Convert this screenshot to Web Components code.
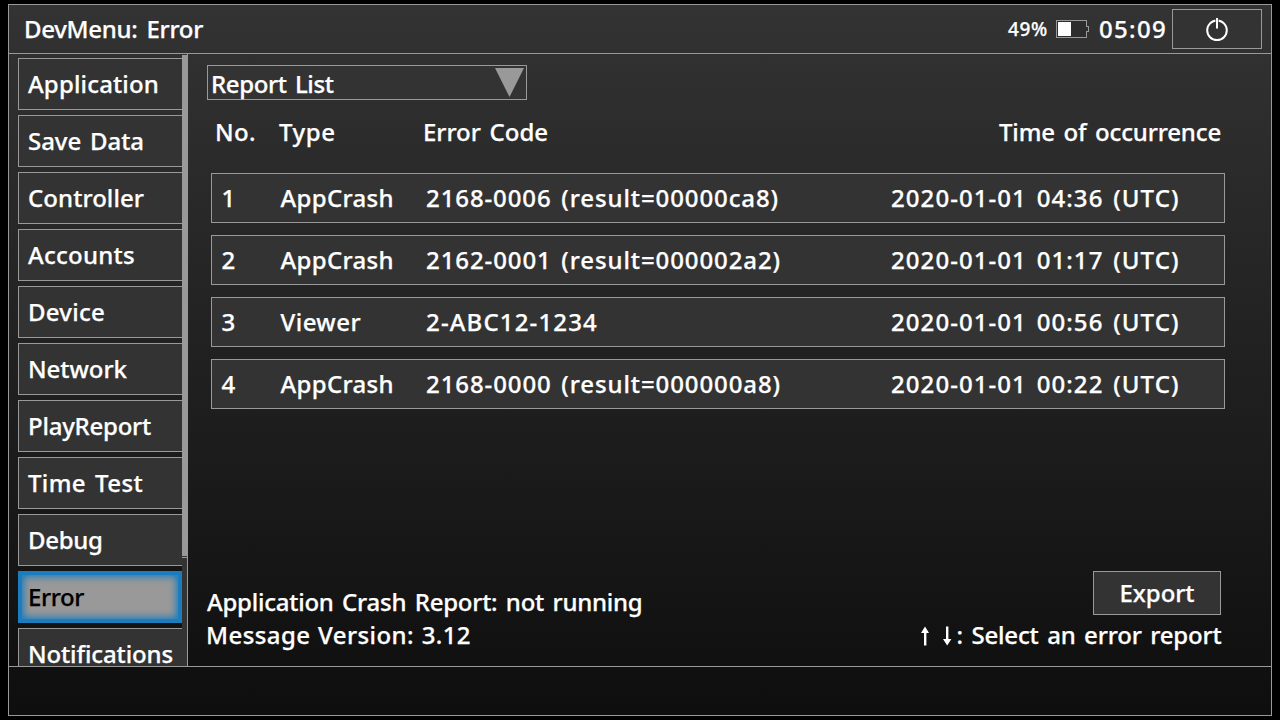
<!DOCTYPE html>
<html lang="en">
<head>
<meta charset="utf-8">
<title>DevMenu: Error</title>
<style>
html, body { margin: 0; height: 100%; background: #000; overflow: hidden; }
body { font: 500 24px/30px "Noto Sans", "Open Sans", sans-serif; color: #fff; word-spacing: 2.5px; -webkit-text-stroke: .25px currentColor; }
</style>
</head>
<body>
<dev-menu></dev-menu>
<script>
const define = (name, html, connected) => {
  customElements.define(name, class extends HTMLElement {
    constructor() {
      super();
      this.attachShadow({ mode: 'open' }).innerHTML = html;
    }
    connectedCallback() { if (connected) connected.call(this, this.shadowRoot); }
  });
};

// Single-line text whose tracking is adjusted to fill the width given in "w".
define('ui-text', `<style>
  :host { display: block; white-space: pre; flex: none; width: max-content; }
  span { display: inline-block; }
</style><span></span>`, function (root) {
  const span = root.querySelector('span');
  span.textContent = this.getAttribute('text');
  const w = parseFloat(this.getAttribute('w'));
  if (w) {
    const natural = span.getBoundingClientRect().width;
    const n = span.textContent.length;
    span.style.letterSpacing = ((w - natural) / n).toFixed(3) + 'px';
  }
});

define('battery-icon', `<style>:host { display: block; width: 33px; height: 18px; } svg { display: block; }</style>
<svg width="33" height="18" viewBox="0 0 33 18" shape-rendering="crispEdges">
  <path d="M.5 .5H30.5V6.5H32.5V11.5H30.5V17.5H.5Z" fill="#2d2d2d" stroke="#999"/>
  <rect x="2" y="2" width="13" height="14" fill="#fff"/>
</svg>`);

define('power-button', `<style>
  :host { display: flex; box-sizing: border-box; width: 90px; height: 40px; border: 1px solid #999; background: #333; }
  svg { display: block; margin: 8px 0 0 33px; }
</style>
<svg width="24" height="24" viewBox="0 0 24 24" fill="none" stroke="#fff" stroke-width="2">
  <circle cx="11" cy="12.3" r="9.8"/>
  <path d="M11 0.8V4" stroke="#333" stroke-width="3.2"/>
  <path d="M11 0V10.6"/>
</svg>`);

define('title-bar', `<style>
  :host { display: flex; box-sizing: border-box; height: 49px; border-bottom: 1px solid #999; padding: 0 9px 0 15px; }
  .t { margin-top: 9px; word-spacing: 3px; }
  .pct { margin: 9px 8px 0 auto; font-size: 19px; }
  battery-icon { margin-top: 15px; }
  .clock { margin: 9px 5px 0 10px; }
  power-button { margin-top: 4px; }
</style>
<ui-text class="t" text="DevMenu: Error" w="179"></ui-text>
<ui-text class="pct" text="49%" w="40"></ui-text>
<battery-icon></battery-icon>
<ui-text class="clock" text="05:09" w="68"></ui-text>
<power-button></power-button>`);

define('menu-item', `<style>
  :host { display: flex; flex: none; box-sizing: border-box; height: 52px; width: 165px; border: 1px solid #999; border-right: 0; background: #333; padding: 10px 0 0 9px; }
  :host([selected]) { width: 164px; border: 4px solid #1b7dbd; background: #999; color: #000; padding: 7px 0 0 6px; box-shadow: inset 0 0 7px 2px #1b7dbd; }
</style><slot></slot>`);

define('side-menu', `<style>
  :host { display: flex; box-sizing: border-box; width: 179px; height: 612px; padding-left: 9px; border-right: 1px solid #999; overflow: hidden; }
  .list { display: flex; flex-direction: column; gap: 5px; width: 164px; overflow: hidden; padding-top: 4px; box-sizing: border-box; height: 612px; }
  .track { width: 5px; height: 611px; margin-top: 1px; background: #333; }
  .thumb { height: 501px; background: #999; border-bottom: 1px solid #333; }
  .end { height: 1px; background: #999; }
</style><div class="list"></div><div class="track"><div class="thumb"></div><div class="end"></div></div>`, function (root) {
  const items = [['Application', 131], ['Save Data', 116], ['Controller', 116], ['Accounts', 107], ['Device', 77], ['Network', 99], ['PlayReport', 123], ['Time Test', 115], ['Debug', 74.5], ['Error', 56], ['Notifications', 145]];
  root.querySelector('.list').innerHTML = items.map(([t, w]) =>
    `<menu-item${t === 'Error' ? ' selected' : ''}><ui-text text="${t}" w="${w}"></ui-text></menu-item>`).join('');
});

define('drop-down', `<style>
  :host { display: flex; justify-content: space-between; box-sizing: border-box; width: 320px; height: 35px; border: 1px solid #999; background: #333; padding: 3px 2px 0 3px; }
  svg { display: block; margin-top: -1px; }
</style><ui-text text="Report List" w="122.5"></ui-text>
<svg width="29" height="29" viewBox="0 0 29 29"><path d="M0 0H29L14.5 29Z" fill="#999"/></svg>`);

define('report-row', `<style>
  :host { display: grid; grid-template-columns: 59px 145.5px 465px 1fr; box-sizing: border-box; height: 50px; border: 1px solid #999; background: #333; padding: 9px 0 0 9.5px; }
</style><slot></slot>`);

define('report-list', `<style>
  :host { display: flex; flex-direction: column; gap: 12px; width: 1014px; }
</style>`, function (root) {
  const rows = [
    [['1', 0], ['AppCrash', 113.5], ['2168-0006 (result=00000ca8)', 353], ['2020-01-01 04:36 (UTC)', 288.5]],
    [['2', 0], ['AppCrash', 113.5], ['2162-0001 (result=000002a2)', 355], ['2020-01-01 01:17 (UTC)', 288.5]],
    [['3', 0], ['Viewer', 80.5], ['2-ABC12-1234', 172], ['2020-01-01 00:56 (UTC)', 288.5]],
    [['4', 0], ['AppCrash', 113.5], ['2168-0000 (result=000000a8)', 355], ['2020-01-01 00:22 (UTC)', 288.5]]];
  root.innerHTML += rows.map(r => `<report-row>${r.map(([t, w]) => `<ui-text text="${t}" w="${w}"></ui-text>`).join('')}</report-row>`).join('');
});

define('export-button', `<style>
  :host { display: flex; justify-content: center; box-sizing: border-box; width: 128px; height: 44px; border: 1px solid #999; background: #333; padding-top: 6px; }
</style><ui-text text="Export" w="75"></ui-text>`);

define('arrow-keys', `<style>:host { display: block; width: 34px; height: 20px; } svg { display: block; }</style>
<svg width="34" height="20" viewBox="0 0 34 20" fill="#fff">
  <path d="M4 19.5V7H1L5 .5L9 7H6.4V19.5ZM26 .5V13H23L27.2 19.5L31.4 13H28.4V.5Z"/></svg>`);

define('error-panel', `<style>
  :host { display: flex; flex-direction: column; box-sizing: border-box; flex: 1; padding: 11px 0 0 19px; height: 612px; }
  .head { display: grid; grid-template-columns: 64px 144px 576px 1fr; margin: 17px 0 26px 8px; height: 30px; }
  report-list { margin-left: 4px; }
  .foot { display: flex; justify-content: space-between; width: 1014px; margin-top: 162px; }
  .status { padding-top: 16px; }
  .status ui-text { height: 33px; }
  .status .v { margin-left: -1px; word-spacing: 1px; }
  .act { display: flex; flex-direction: column; align-items: flex-end; }
  .hint { display: flex; margin-top: 5px; }
  .hint ui-text { margin-right: -.5px; }
  arrow-keys { margin: 6px 3px 0 0; }
</style>
<drop-down></drop-down>
<div class="head"><ui-text text="No." w="41"></ui-text><ui-text text="Type" w="56.5"></ui-text><ui-text text="Error Code" w="125"></ui-text><ui-text text="Time of occurrence" w="222"></ui-text></div>
<report-list></report-list>
<div class="foot">
  <div class="status"><ui-text text="Application Crash Report: not running" w="435.5"></ui-text><ui-text class="v" text="Message Version: 3.12" w="265"></ui-text></div>
  <div class="act"><export-button></export-button><div class="hint"><arrow-keys></arrow-keys><ui-text text=": Select an error report" w="265"></ui-text></div></div>
</div>`);

define('dev-menu', `<style>
  :host { display: block; box-sizing: border-box; width: 1264px; height: 712px; margin: 4px 0 0 8px; border: 1px solid #999; background: linear-gradient(#333, #0e0e0e); }
  .body { display: flex; height: 612px; border-bottom: 1px solid #999; }
</style>
<title-bar></title-bar><div class="body"><side-menu></side-menu><error-panel></error-panel></div>`);
</script>
</body>
</html>
